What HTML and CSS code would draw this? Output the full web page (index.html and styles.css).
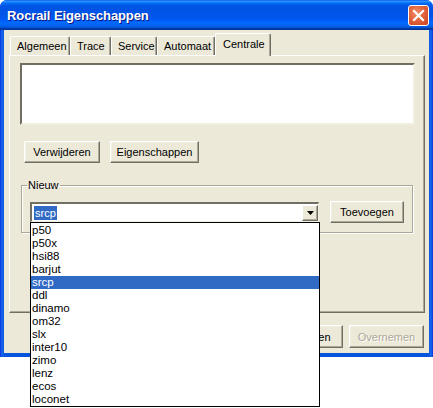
FILE: index.html
```html
<!DOCTYPE html>
<html>
<head>
<meta charset="utf-8">
<link rel="stylesheet" href="styles.css">
</head>
<body>
<div class="window">
  <div class="titlebar">
    <span class="title">Rocrail Eigenschappen</span>
    <span class="close">
      <svg width="13" height="13" viewBox="0 0 13 13"><path d="M2 2 L11 11 M11 2 L2 11" stroke="#fff" stroke-width="2.2" stroke-linecap="square"/></svg>
    </span>
  </div>
  <div class="client">
    <div class="tabs">
      <div class="tab">Algemeen</div>
      <div class="tab">Trace</div>
      <div class="tab">Service</div>
      <div class="tab">Automaat</div>
      <div class="tab active">Centrale</div>
    </div>
    <div class="panel">
      <div class="listbox"></div>
      <div class="btnrow">
        <div class="btn w76">Verwijderen</div>
        <div class="btn w89">Eigenschappen</div>
      </div>
      <fieldset class="group">
        <legend>Nieuw</legend>
        <div class="grouprow">
          <div class="combo">
            <span class="combotext"><span class="sel">srcp</span></span>
            <span class="dropbtn"><svg width="7" height="4" viewBox="0 0 7 4"><path d="M0 0 H7 L3.5 4 Z" fill="#000"/></svg></span>
          </div>
          <div class="btn w74">Toevoegen</div>
        </div>
      </fieldset>
    </div>
    <div class="bottom">
      <div class="btn w75">OK</div>
      <div class="btn w75">Annuleren</div>
      <div class="btn w75 disabled">Overnemen</div>
    </div>
  </div>
</div>
<div class="droplist">
  <div class="item">p50</div>
  <div class="item">p50x</div>
  <div class="item">hsi88</div>
  <div class="item">barjut</div>
  <div class="item hl">srcp</div>
  <div class="item">ddl</div>
  <div class="item">dinamo</div>
  <div class="item">om32</div>
  <div class="item">slx</div>
  <div class="item">inter10</div>
  <div class="item">zimo</div>
  <div class="item">lenz</div>
  <div class="item">ecos</div>
  <div class="item">loconet</div>
</div>
</body>
</html>
```
FILE: styles.css
```css
* { box-sizing: border-box; }
html, body { margin: 0; padding: 0; background: #fff; }
body {
  font-family: "Liberation Sans", Arial, sans-serif;
  font-size: 11px;
  color: #000;
  width: 433px;
  height: 408px;
  overflow: hidden;
}
.window {
  width: 433px;
  height: 357px;
  display: flex;
  flex-direction: column;
  background: linear-gradient(90deg, #0831D9 0, #166AEE 2px, #0855DD 4px, #0855DD 429px, #166AEE 431px, #0831D9 433px);
  border-radius: 7px 7px 0 0;
  overflow: hidden;
}
.titlebar {
  height: 30px;
  flex: none;
  display: flex;
  align-items: center;
  justify-content: space-between;
  padding: 0 4px 0 7px;
  background: linear-gradient(#0058EE 0%, #3593FF 4%, #288EFF 6%, #127DFF 8%, #036FFC 10%, #0262EE 14%, #0057E5 20%, #0054E3 24%, #0055EB 56%, #005BF5 66%, #026AFE 76%, #0062EF 86%, #0052D6 92%, #0040AB 94%, #003092 100%);
}
.title {
  color: #fff;
  font-weight: bold;
  font-size: 13px;
  letter-spacing: -0.1px;
  text-shadow: 1px 1px 0 #0A1883;
  padding-top: 1px;
}
.close {
  width: 21px;
  height: 21px;
  border: 1px solid #fff;
  border-radius: 3px;
  background: radial-gradient(circle at 40% 35%, #F0906A 0%, #E2643C 45%, #C8411E 100%);
  display: flex;
  align-items: center;
  justify-content: center;
  margin-top: 1px;
}
.client {
  flex: 1;
  margin: 0 4px 4px 4px;
  background: #ECE9D8;
  padding: 3px 4px 5px 5px;
  display: flex;
  flex-direction: column;
}
.tabs {
  height: 22px;
  display: flex;
  align-items: flex-end;
  padding-left: 1px;
  position: relative;
  z-index: 1;
}
.tab {
  height: 19px;
  padding: 3px 6px 0 6px;
  border: 1px solid #fff;
  border-right: 1px solid #716F64;
  border-bottom: none;
  border-radius: 2px 2px 0 0;
  box-shadow: inset -1px 0 0 #ACA899;
  background: #ECE9D8;
  white-space: nowrap;
}
.tab:nth-child(1) { width: 60px; }
.tab:nth-child(2) { width: 41px; }
.tab:nth-child(3) { width: 46px; }
.tab:nth-child(4) { width: 58px; }
.tab.active {
  width: 56px;
  height: 23px;
  margin-bottom: -1px;
  padding-top: 4px;
  padding-left: 7px;
}
.panel {
  height: 258px;
  border: 1px solid #fff;
  border-right: 1px solid #716F64;
  border-bottom: 1px solid #716F64;
  box-shadow: inset -1px -1px 0 #ACA899;
  padding: 7px 9px 0 10px;
  display: flex;
  flex-direction: column;
}
.listbox {
  height: 62px;
  background: #fff;
  border-top: 2px solid #716F64;
  border-left: 2px solid #716F64;
  border-right: 2px solid #F1EFE2;
  border-bottom: 2px solid #F1EFE2;
}
.btnrow {
  display: flex;
  gap: 10px;
  margin-top: 16px;
  padding-left: 4px;
}
.btn {
  height: 22px;
  display: flex;
  align-items: center;
  justify-content: center;
  background: #ECE9D8;
  border: 1px solid;
  border-color: #fff #716F64 #716F64 #fff;
  box-shadow: inset -1px -1px 0 #ACA899, inset 1px 1px 0 #F1EFE2;
  white-space: nowrap;
}
.w76 { width: 76px; }
.w89 { width: 89px; }
.w74 { width: 74px; }
.w75 { width: 75px; height: 23px; }
.disabled { color: #ACA899; text-shadow: 1px 1px 0 #fff; }
.group {
  margin: 16px 0 0 1px;
  width: 392px;
  height: 54px;
  padding: 0 8px 0 8px;
  border: 1px solid #ACA899;
  box-shadow: 1px 1px 0 #fff, inset 1px 1px 0 #fff;
}
.group legend {
  padding: 0 1px;
  margin-left: -3px;
  line-height: 13px;
}
.grouprow {
  display: flex;
  align-items: center;
  gap: 11px;
  margin-top: 9px;
}
.combo {
  width: 289px;
  height: 20px;
  background: #fff;
  border-top: 2px solid #716F64;
  border-left: 2px solid #716F64;
  border-right: 1px solid #F1EFE2;
  border-bottom: 1px solid #F1EFE2;
  display: flex;
  align-items: center;
  justify-content: space-between;
}
.combotext { padding-left: 2px; }
.sel { background: #316AC5; color: #fff; padding: 1px 1px; }
.dropbtn {
  width: 16px;
  height: 16px;
  background: #ECE9D8;
  border: 1px solid;
  border-color: #fff #716F64 #716F64 #fff;
  box-shadow: inset -1px -1px 0 #ACA899;
  display: flex;
  align-items: center;
  justify-content: center;
}
.bottom {
  display: flex;
  justify-content: flex-end;
  gap: 6px;
  margin-top: 12px;
  padding-right: 1px;
}
.droplist {
  position: absolute;
  left: 30px;
  top: 222px;
  width: 290px;
  height: 185px;
  background: #fff;
  border: 1px solid #000;
  padding-top: 1px;
  font-size: 11.5px;
}
.item {
  height: 13px;
  line-height: 13px;
  padding-left: 1px;
}
.item.hl { background: #316AC5; color: #fff; }
```
